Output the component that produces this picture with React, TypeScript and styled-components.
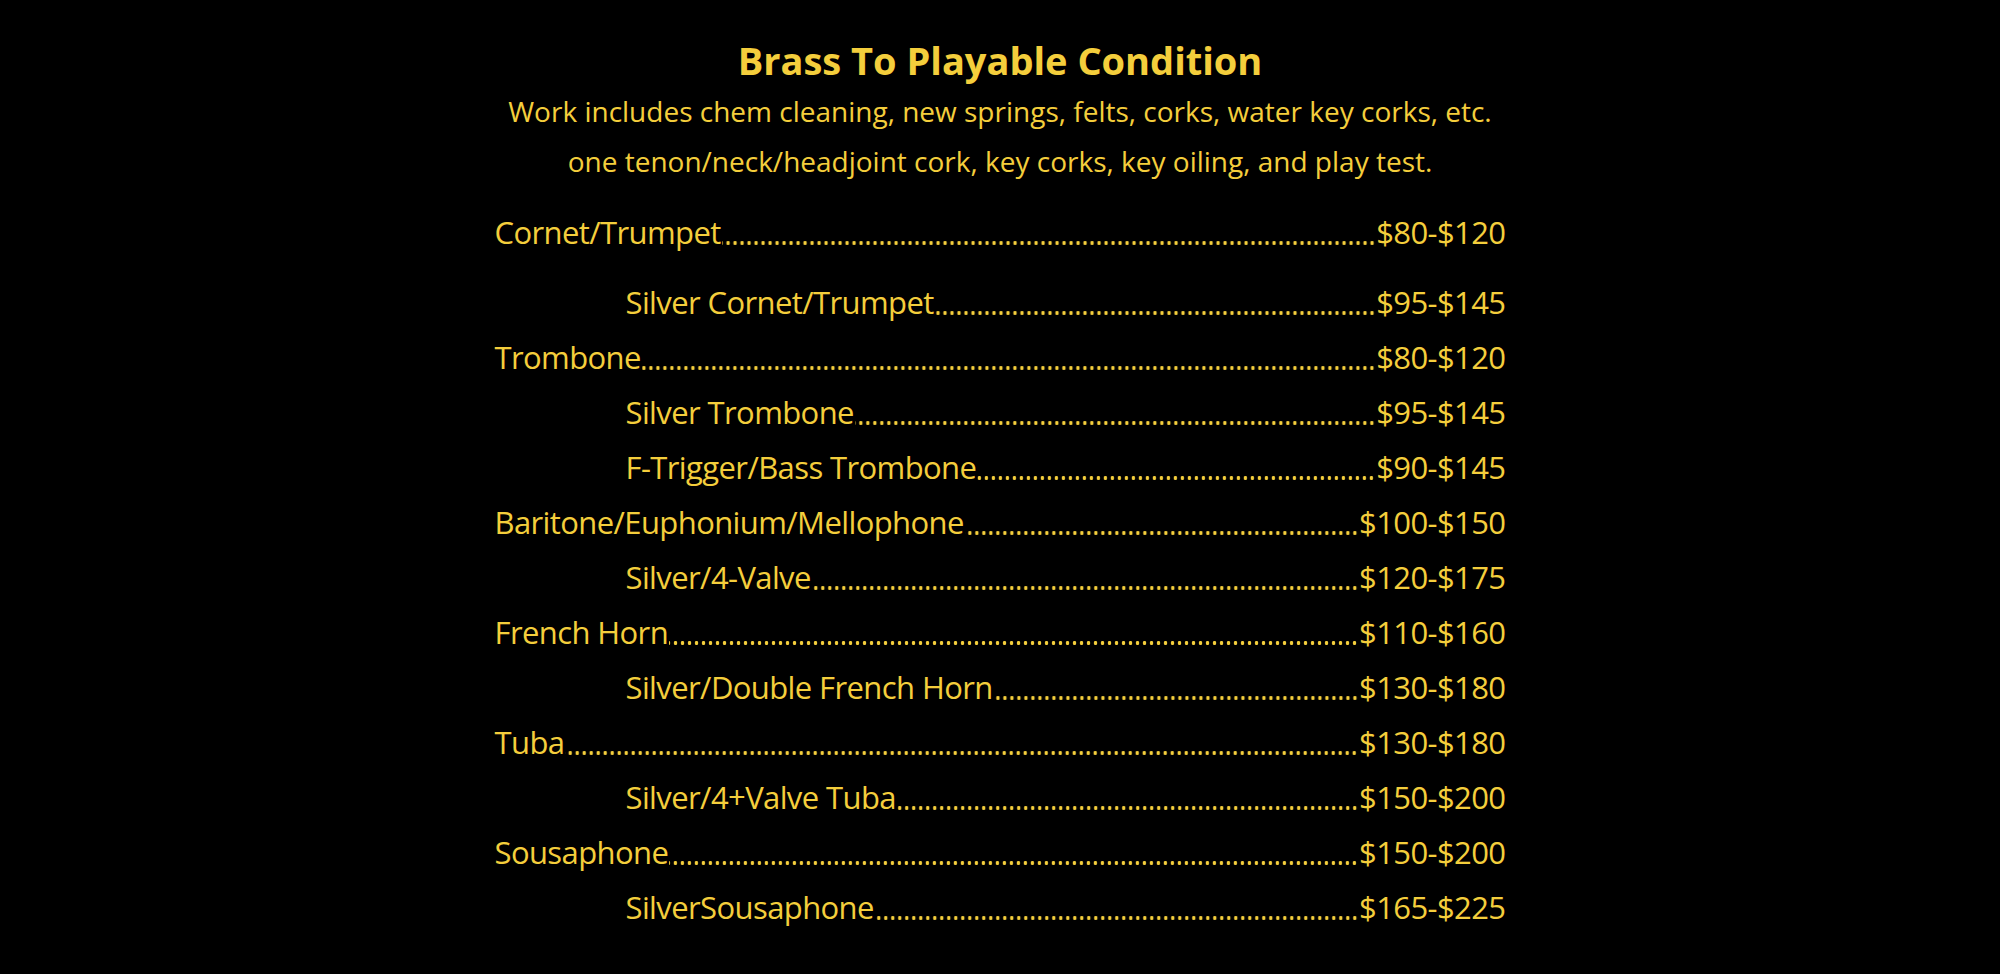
import React from "react";
import styled, { createGlobalStyle } from "styled-components";

const Global = createGlobalStyle`
  html, body { margin: 0; padding: 0; background: #000; }
  body { font-family: "Open Sans", "Noto Sans", sans-serif; }
`;

const YELLOW = "#F4CE3C";

const Page = styled.main`
  min-height: 974px;
  background: #000;
  color: ${YELLOW};
  display: flex;
  flex-direction: column;
  align-items: center;
  padding-top: 38px;
  box-sizing: border-box;
`;

const Title = styled.h1`
  margin: 0;
  font-family: "Open Sans", sans-serif;
  font-weight: 700;
  font-size: 38px;
  line-height: 44px;
  letter-spacing: 0;
  text-align: center;
`;

const Intro = styled.p`
  margin: 4px 0 0;
  font-size: 28px;
  line-height: 50px;
  letter-spacing: 0;
  text-align: center;
`;

const List = styled.ul`
  list-style: none;
  margin: 19px 0 0;
  padding: 0;
  width: 1011px;
  display: flex;
  flex-direction: column;
`;

const Row = styled.li<{ $indent?: boolean; $gapAfter?: number }>`
  display: flex;
  align-items: baseline;
  font-size: 31px;
  font-weight: 500;
  line-height: 55px;
  letter-spacing: -0.6px;
  padding-left: ${(p) => (p.$indent ? 131 : 0)}px;
  margin-bottom: ${(p) => p.$gapAfter ?? 0}px;
  white-space: nowrap;
`;

const Name = styled.span`
  flex: none;
`;

const Leader = styled.span`
  flex: 1;
  min-width: 0;
  align-self: flex-end;
  height: 4px;
  margin: 0 1px 15px 1px;
  background-image: radial-gradient(circle at center, ${YELLOW} 1.7px, transparent 2.1px);
  background-size: 7px 4px;
  background-repeat: repeat-x;
  background-position: right bottom;
`;

const Price = styled.span`
  flex: none;
`;

const items: { name: string; price: string; indent?: boolean }[] = [
  { name: "Cornet/Trumpet", price: "$80-$120" },
  { name: "Silver Cornet/Trumpet", price: "$95-$145", indent: true },
  { name: "Trombone", price: "$80-$120" },
  { name: "Silver Trombone", price: "$95-$145", indent: true },
  { name: "F-Trigger/Bass Trombone", price: "$90-$145", indent: true },
  { name: "Baritone/Euphonium/Mellophone", price: "$100-$150" },
  { name: "Silver/4-Valve", price: "$120-$175", indent: true },
  { name: "French Horn", price: "$110-$160" },
  { name: "Silver/Double French Horn", price: "$130-$180", indent: true },
  { name: "Tuba", price: "$130-$180" },
  { name: "Silver/4+Valve Tuba", price: "$150-$200", indent: true },
  { name: "Sousaphone", price: "$150-$200" },
  { name: "SilverSousaphone", price: "$165-$225", indent: true },
];

export default function App() {
  return (
    <>
      <Global />
      <Page>
        <Title>Brass To Playable Condition</Title>
        <Intro>
          Work includes chem cleaning, new springs, felts, corks, water key corks, etc.
          <br />
          one tenon/neck/headjoint cork, key corks, key oiling, and play test.
        </Intro>
        <List>
          {items.map((it, i) => (
            <Row key={it.name} $indent={it.indent} $gapAfter={i === 0 ? 15 : 0}>
              <Name>{it.name}</Name>
              <Leader aria-hidden="true" />
              <Price>{it.price}</Price>
            </Row>
          ))}
        </List>
      </Page>
    </>
  );
}
